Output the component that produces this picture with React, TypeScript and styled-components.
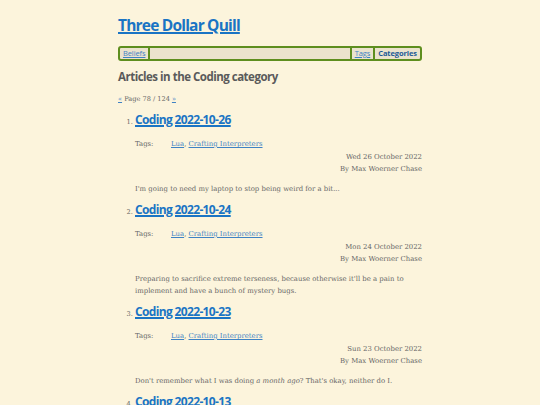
import React from "react";
import styled, { createGlobalStyle } from "styled-components";

const Global = createGlobalStyle`
  html, body { margin: 0; padding: 0; background: #fcf4dc; }
  body { font-family: "DejaVu Serif", "Liberation Serif", serif; color: #5f5f5f; }
`;

const Page = styled.div`
  width: 304px;
  margin: 0 auto;
  padding-top: 14px;
`;

const SiteTitle = styled.h1`
  margin: 0 0 10px 0;
  font-family: "Open Sans", "Noto Sans", sans-serif;
  font-size: 15.5px;
  font-weight: 700;
  letter-spacing: -0.8px;
  line-height: 22px;
  a { color: #1a74c4; text-decoration: underline; text-decoration-thickness: 1.5px; }
`;

const Nav = styled.nav`
  display: flex;
  align-items: stretch;
  height: 11px;
  border: 2px solid #5e8e1e;
  border-radius: 3px;
  background: #ebe3cd;
  padding: 0 1px;
  font-family: "Open Sans", "Noto Sans", sans-serif;
  font-size: 7.5px;
  letter-spacing: -0.1px;
  line-height: 11px;
`;

const NavLink = styled.a<{ $current?: boolean }>`
  padding: 0 2px;
  color: ${(p) => (p.$current ? "#1d5a96" : "#3f82c4")};
  font-weight: ${(p) => (p.$current ? 700 : 400)};
  text-decoration: ${(p) => (p.$current ? "none" : "underline")};
`;

const Bar = styled.span`
  width: 2px;
  background: #5e8e1e;
  margin: 0 1px;
`;

const Spacer = styled.span`
  flex: 1;
`;

const Heading = styled.h2`
  margin: 8px 0 0 0;
  font-family: "Open Sans", "Noto Sans", sans-serif;
  font-size: 11.5px;
  font-weight: 700;
  letter-spacing: -0.5px;
  line-height: 16px;
  color: #5a5a5a;
`;

const Pager = styled.p`
  margin: 9px 0 0 0;
  font-size: 6.6px;
  line-height: 10px;
  color: #666;
  a { color: #3f82c4; }
`;

const List = styled.ol`
  margin: 8px 0 0 0;
  padding-left: 17px;
  font-size: 6.9px;
  color: #666;
`;

const Item = styled.li`
  margin-bottom: 7px;
  &::marker { font-size: 6.6px; }
`;

const Title = styled.a`
  font-family: "Open Sans", "Noto Sans", sans-serif;
  font-size: 12px;
  font-weight: 700;
  letter-spacing: -0.65px;
  line-height: 16px;
  color: #1a74c4;
  text-decoration: underline;
  text-decoration-thickness: 1.5px;
`;

const Tags = styled.div`
  display: flex;
  margin-top: 9px;
  line-height: 14px;
  a { color: #3f82c4; }
`;

const TagLabel = styled.span`
  width: 36px;
`;

const Meta = styled.div`
  text-align: right;
  line-height: 12px;
`;

const Summary = styled.p`
  margin: 8px 0 0 0;
  line-height: 12px;
`;

type Post = { title: string; date: string; summary: React.ReactNode };

const posts: Post[] = [
  {
    title: "Coding 2022-10-26",
    date: "Wed 26 October 2022",
    summary: "I'm going to need my laptop to stop being weird for a bit...",
  },
  {
    title: "Coding 2022-10-24",
    date: "Mon 24 October 2022",
    summary:
      "Preparing to sacrifice extreme terseness, because otherwise it'll be a pain to implement and have a bunch of mystery bugs.",
  },
  {
    title: "Coding 2022-10-23",
    date: "Sun 23 October 2022",
    summary: (
      <>
        Don't remember what I was doing <em>a month ago</em>? That's okay, neither do I.
      </>
    ),
  },
  {
    title: "Coding 2022-10-13",
    date: "Thu 13 October 2022",
    summary: "More work on the interpreter.",
  },
];

export default function App() {
  return (
    <>
      <Global />
      <Page>
        <SiteTitle>
          <a href="#">Three Dollar Quill</a>
        </SiteTitle>
        <Nav>
          <NavLink href="#">Beliefs</NavLink>
          <Bar />
          <Spacer />
          <Bar />
          <NavLink href="#">Tags</NavLink>
          <Bar />
          <NavLink href="#" $current>
            Categories
          </NavLink>
        </Nav>
        <Heading>Articles in the Coding category</Heading>
        <Pager>
          <a href="#">«</a> Page 78 / 124 <a href="#">»</a>
        </Pager>
        <List>
          {posts.map((p) => (
            <Item key={p.title}>
              <Title href="#">{p.title}</Title>
              <Tags>
                <TagLabel>Tags:</TagLabel>
                <span>
                  <a href="#">Lua</a>, <a href="#">Crafting Interpreters</a>
                </span>
              </Tags>
              <Meta>{p.date}</Meta>
              <Meta>By Max Woerner Chase</Meta>
              <Summary>{p.summary}</Summary>
            </Item>
          ))}
        </List>
      </Page>
    </>
  );
}
